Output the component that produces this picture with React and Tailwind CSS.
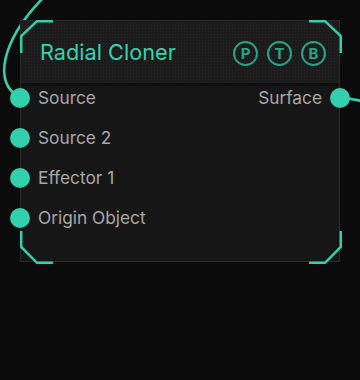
const TEAL = '#34d0ad'

function Handle({ side }) {
  return (
    <span
      className={`absolute top-1/2 -translate-y-1/2 w-5 h-5 rounded-full bg-[#34d0ad] z-10 ${
        side === 'left' ? '-left-[11px]' : '-right-[11px]'
      }`}
    />
  )
}

function Badge({ letter }) {
  return (
    <span className="w-[25px] h-[25px] rounded-full border-2 border-[#26a587] flex items-center justify-center text-[15px] font-bold text-[#26a587] leading-none">
      {letter}
    </span>
  )
}

function Brackets() {
  return (
    <svg className="absolute -left-px -top-px pointer-events-none z-20" width="322" height="244" viewBox="0 0 322 244" fill="none">
      <g stroke={TEAL} strokeWidth="2.5" strokeLinejoin="miter">
        <path d="M1.2 33 V16 L17 1.2 H33" />
        <path d="M289 1.2 H305 L320.8 16 V33" />
        <path d="M1.2 211 V227 L17 242.8 H33" />
        <path d="M289 242.8 H305 L320.8 227 V211" />
      </g>
    </svg>
  )
}

export default function App() {
  const inputs = ['Source 2', 'Effector 1', 'Origin Object']
  return (
    <div className="relative w-[360px] h-[380px] bg-[#0b0b0b] pl-5 pt-5 overflow-hidden font-['Inter',sans-serif]">
      <svg className="absolute left-0 top-0 pointer-events-none" width="360" height="380" fill="none">
        <path d="M20 97 C -8 84, 2 40, 43 -2" stroke={TEAL} strokeWidth="2.6" />
        <path d="M340 97 L362 101" stroke={TEAL} strokeWidth="2.6" />
      </svg>

      <div className="relative w-[320px] h-[242px] border border-[#2a2a2a] bg-[#161616]">
        <Brackets />
        <div className="h-[62px] flex items-center justify-between pl-[19px] pr-[13px] bg-[radial-gradient(#262626_0.6px,transparent_0.8px)] bg-[length:3px_3px] bg-[#1b1b1b]">
          <h1 className="text-[21.7px] text-[#36d2ae] font-normal">Radial Cloner</h1>
          <div className="flex gap-[9px] items-center pt-[2px]">
            <Badge letter="P" />
            <Badge letter="T" />
            <Badge letter="B" />
          </div>
        </div>
        <div className="h-[3px] bg-[#0f0f0f]" />
        <div className="flex flex-col gap-4">
          <div className="relative h-6 flex items-center justify-between pl-[17px] pr-[17px] text-[17.3px] text-[#a8a8a8]">
            <Handle side="left" />
            <span>Source</span>
            <span>Surface</span>
            <Handle side="right" />
          </div>
          {inputs.map(name => (
            <div key={name} className="relative h-6 flex items-center pl-[17px] text-[17.3px] text-[#a8a8a8]">
              <Handle side="left" />
              <span>{name}</span>
            </div>
          ))}
        </div>
      </div>
    </div>
  )
}
